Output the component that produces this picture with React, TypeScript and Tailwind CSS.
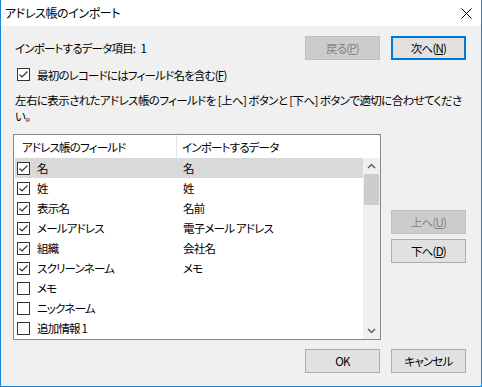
import React from 'react';

const rows = [
  { field: '名', data: '名', checked: true },
  { field: '姓', data: '姓', checked: true },
  { field: '表示名', data: '名前', checked: true },
  { field: 'メールアドレス', data: '電子メール アドレス', checked: true },
  { field: '組織', data: '会社名', checked: true },
  { field: 'スクリーンネーム', data: 'メモ', checked: true },
  { field: 'メモ', data: '', checked: false },
  { field: 'ニックネーム', data: '', checked: false },
  { field: '追加情報\u00a01', data: '', checked: false },
];

function CheckBox({ checked }: { checked: boolean }) {
  return (
    <span className="w-[13px] h-[13px] border border-[#333333] bg-white flex items-center justify-center shrink-0">
      {checked && (
        <svg width="11" height="11" viewBox="0 0 11 11">
          <polyline points="1.5,5.5 4,8 9.5,2.5" fill="none" stroke="#333333" strokeWidth="1.2" />
        </svg>
      )}
    </span>
  );
}

function Button({ children, disabled, primary }: { children: React.ReactNode; disabled?: boolean; primary?: boolean }) {
  const base = 'w-[75px] h-[24px] flex items-center justify-center';
  if (disabled) return <div className={`${base} bg-[#cccccc] border border-[#bfbfbf] text-[#838383]`}>{children}</div>;
  if (primary) return <div className={`${base} bg-[#e1e1e1] border-2 border-[#0078d7] text-black`}>{children}</div>;
  return <div className={`${base} bg-[#e1e1e1] border border-[#adadad] text-black`}>{children}</div>;
}

export default function App() {
  return (
    <div className="w-[482px] h-[387px] flex flex-col border-x border-b border-[#1883d7] font-['Noto_Sans_CJK_JP',sans-serif] [font-feature-settings:'palt'] text-[11.5px] tracking-[-0.8px] leading-[16px] text-black overflow-hidden">
      {/* title bar */}
      <div className="h-[26px] bg-white flex items-center justify-between pl-[4px] pr-[9px] shrink-0">
        <span className="text-[12px] tracking-[-0.4px]">アドレス帳のインポート</span>
        <svg width="11" height="11" viewBox="0 0 11 11">
          <path d="M0.5 0.5 L10.5 10.5 M10.5 0.5 L0.5 10.5" stroke="#000" strokeWidth="1" />
        </svg>
      </div>

      <div className="flex-1 bg-[#f0f0f0] pl-[12px] pr-[15px] pt-[10px] flex flex-col">
        <div className="flex items-center">
          <span className="pl-[2px] flex-1">インポートするデータ項目:&nbsp;&nbsp;&nbsp;1</span>
          <div className="flex gap-[11px]">
            <Button disabled>戻る(<u>P</u>)</Button>
            <Button primary>次へ(<u>N</u>)</Button>
          </div>
        </div>

        <div className="flex items-center gap-[7px] mt-[8px] pl-[4px] h-[13px]">
          <CheckBox checked />
          <span>最初のレコードにはフィールド名を含む(<u>F</u>)</span>
        </div>

        <p className="mt-[11px] pl-[2px] whitespace-nowrap tracking-[-0.6px]">
          左右に表示されたアドレス帳のフィールドを&nbsp;[上へ]&nbsp;ボタンと&nbsp;[下へ]&nbsp;ボタンで適切に合わせてくださ
          <br />
          い。
        </p>

        <div className="flex mt-[10px]">
          <div className="w-[368px] h-[206px] border border-[#828790] bg-white flex flex-col">
            <div className="h-[23px] flex items-center shrink-0">
              <div className="w-[163px] h-full flex items-center pl-[8px] border-r border-[#e5e5e5]">アドレス帳のフィールド</div>
              <div className="pl-[5px]">インポートするデータ</div>
            </div>
            <div className="flex flex-1">
              <div className="flex-1 pl-[1px]">
                {rows.map((r, i) => (
                  <div key={i} className={`h-[20px] flex items-center ${i === 0 ? 'bg-[#d9d9d9]' : ''}`}>
                    <div className="w-[168px] flex items-center gap-[7px] pl-[2px]">
                      <CheckBox checked={r.checked} />
                      <span>{r.field}</span>
                    </div>
                    <span>{r.data}</span>
                  </div>
                ))}
              </div>
              <div className="w-[17px] bg-[#f0f0f0] flex flex-col items-center">
                <div className="h-[16px] w-full flex items-center justify-center">
                  <svg width="9" height="6" viewBox="0 0 9 6">
                    <polyline points="1,5 4.5,1.5 8,5" fill="none" stroke="#606060" strokeWidth="1.5" />
                  </svg>
                </div>
                <div className="w-[15px] h-[31px] bg-[#cdcdcd]" />
                <div className="flex-1" />
                <div className="h-[16px] w-full flex items-center justify-center">
                  <svg width="9" height="6" viewBox="0 0 9 6">
                    <polyline points="1,1 4.5,4.5 8,1" fill="none" stroke="#606060" strokeWidth="1.5" />
                  </svg>
                </div>
              </div>
            </div>
          </div>

          <div className="ml-[10px] pt-[76px] flex flex-col gap-[5px]">
            <Button disabled>上へ(<u>U</u>)</Button>
            <Button>下へ(<u>D</u>)</Button>
          </div>
        </div>

        <div className="flex justify-end gap-[11px] mt-[9px]">
          <Button>OK</Button>
          <Button>キャンセル</Button>
        </div>
      </div>
    </div>
  );
}
